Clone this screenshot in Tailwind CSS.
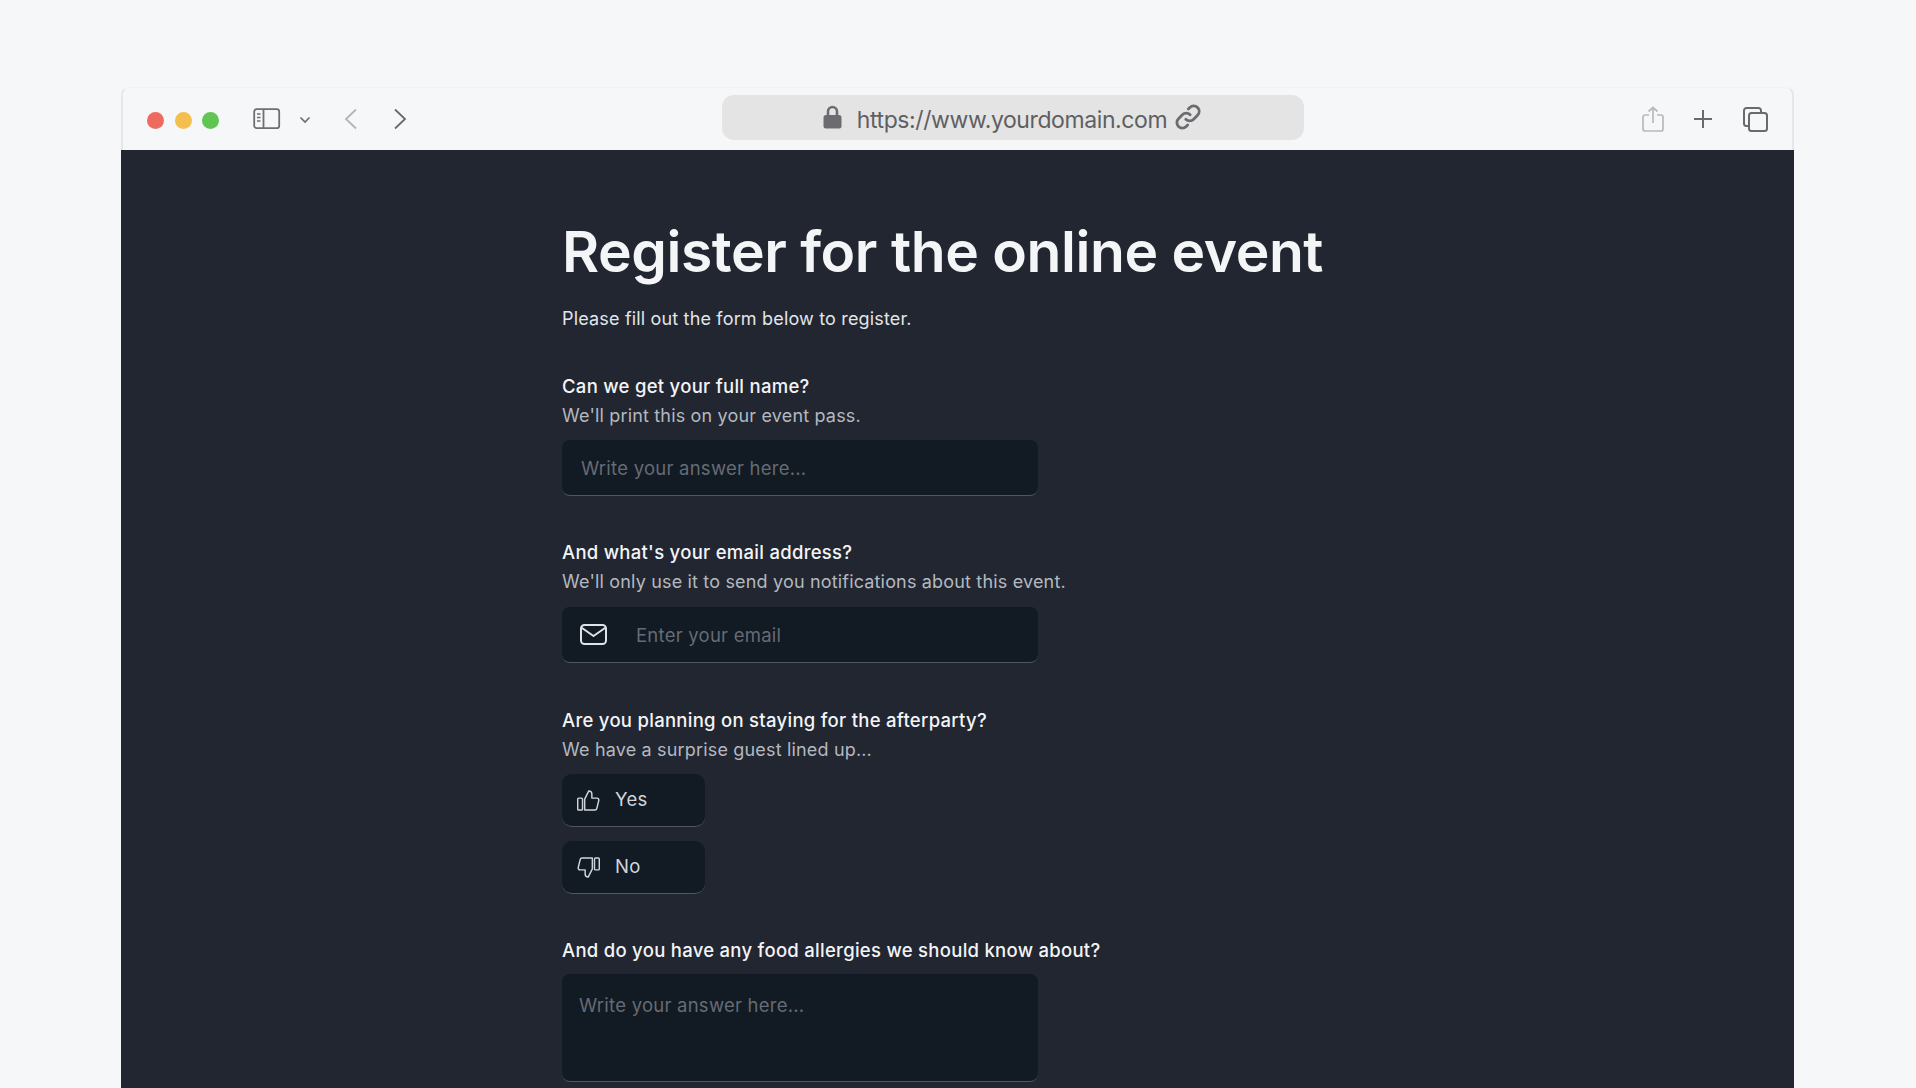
<!DOCTYPE html>
<html lang="en">

<head>
    <meta charset="UTF-8">
    <title>Register</title>
    <script src="https://cdn.jsdelivr.net/npm/@tailwindcss/browser@4"></script>
</head>

<body class="bg-[#f6f7f9] font-[Inter,sans-serif] h-[1088px] overflow-hidden">

    <div class="pt-[87px] pl-[121px] w-[1795px]">
        <div class="w-[1673px] h-[1001px] flex flex-col">

            <!-- browser toolbar -->
            <div class="h-[63px] shrink-0 relative flex items-center bg-[#f6f7f9] rounded-t-[8px] border-x-2 border-t border-x-[#e6e7e9] border-t-[#f2f3f5] pt-[2px]">
                <div class="flex items-center gap-[10.500px] ml-[24px]">
                    <span class="w-[17px] h-[17px] rounded-full bg-[#ec6a5e]"></span>
                    <span class="w-[17px] h-[17px] rounded-full bg-[#f4bf4f]"></span>
                    <span class="w-[17px] h-[17px] rounded-full bg-[#61c554]"></span>
                </div>
                <svg class="ml-[34px] mb-[2px]" width="28" height="22" viewBox="0 0 28 22" fill="none">
                    <rect x="1.200" y="1.200" width="25" height="19" rx="2.500" stroke="#6f6f72" stroke-width="1.800"/>
                    <path d="M10.500 1.500V20" stroke="#6f6f72" stroke-width="1.800"/>
                    <path d="M4 6h3.500M4 9.500h3.500M4 13h3.500" stroke="#6f6f72" stroke-width="1.500"/>
                </svg>
                <svg class="ml-[18px]" width="12" height="8" viewBox="0 0 12 8" fill="none"><path d="M1.500 1.500 6 6l4.500-4.500" stroke="#6f6f72" stroke-width="1.700"/></svg>
                <svg class="ml-[33px] mb-[2px]" width="14" height="22" viewBox="0 0 14 22" fill="none"><path d="M12 1.500 2 11l10 9.500" stroke="#b5b5b7" stroke-width="1.800"/></svg>
                <svg class="ml-[35px] mb-[2px]" width="14" height="22" viewBox="0 0 14 22" fill="none"><path d="M2 1.500 12 11 2 20.500" stroke="#6a6a6d" stroke-width="1.800"/></svg>

                <div class="absolute left-[599px] top-[7px] w-[582px] h-[45px] rounded-[12px] bg-[#e4e4e5] flex items-center justify-center text-[23px] text-[#5f5f62] tracking-[-0.4px] pr-[2px]">
                    <svg width="19" height="24" viewBox="0 0 19 24" fill="none" class="mr-[15px] mb-[1px]">
                        <path d="M5 11V6.500a4.500 4.500 0 0 1 9 0V11" stroke="#6c6c70" stroke-width="2.600"/>
                        <rect x="0.500" y="10" width="18" height="13.500" rx="2.500" fill="#6c6c70"/>
                    </svg>
                    <span class="leading-none mt-[5px]">https://www.yourdomain.com</span>
                    <svg width="26" height="26" viewBox="0 0 24 24" fill="none" class="ml-[8px] mb-[2px]" stroke="#6c6c70" stroke-width="2.600" stroke-linecap="round">
                        <path d="M10 14a5 5 0 0 0 7.200 0l3.600-3.600a5 5 0 0 0-7.100-7.100l-1.400 1.400"/>
                        <path d="M14 10a5 5 0 0 0-7.200 0l-3.600 3.600a5 5 0 0 0 7.100 7.100l1.400-1.400"/>
                    </svg>
                </div>

                <div class="ml-auto flex items-center mr-[24px] mb-[2px]">
                    <svg width="22" height="26" viewBox="0 0 22 26" fill="none" stroke="#b9b9bb" stroke-width="1.700" class="mb-[1px]">
                        <path d="M7 9H3a2 2 0 0 0-2 2v12a2 2 0 0 0 2 2h16a2 2 0 0 0 2-2V11a2 2 0 0 0-2-2h-4"/>
                        <path d="M11 17V1.500M6.500 5.500 11 1.500l4.500 4"/>
                    </svg>
                    <svg class="ml-[29px]" width="20" height="20" viewBox="0 0 20 20" fill="none" stroke="#6a6a6d" stroke-width="2"><path d="M10 1v18M1 10h18"/></svg>
                    <svg class="ml-[30px]" width="25" height="25" viewBox="0 0 25 25" fill="none" stroke="#6a6a6d" stroke-width="2">
                        <path d="M5 19H3.500A2.500 2.500 0 0 1 1 16.500V3.500A2.500 2.500 0 0 1 3.500 1h12A2.500 2.500 0 0 1 18 3.500V6"/>
                        <rect x="6" y="6" width="18" height="18" rx="2.500"/>
                    </svg>
                </div>
            </div>

            <!-- page -->
            <div class="flex-1 bg-[#212631] pl-[441px] overflow-hidden">
                <h1 class="mt-[66px] text-[57px] leading-[71px] font-semibold text-[#f4f5f6] tracking-[-0.45px]">Register for the online event</h1>
                <p class="mt-[18px] text-[18px] leading-[27px] text-[#e3e5e8] tracking-[0.17px]">Please fill out the form below to register.</p>

                <label class="block mt-[40px] text-[18.500px] leading-[28px] font-medium text-[#f3f4f6] tracking-[0.28px]">Can we get your full name?</label>
                <p class="mt-[2px] text-[18px] leading-[28px] text-[#b4b8bf] tracking-[0.17px]">We'll print this on your event pass.</p>
                <div class="mt-[10px] w-[476px] h-[56px] rounded-[8px] bg-[#121a23] border-b border-[#505662] flex items-center pl-[19px] pt-[2px] text-[18.500px] text-[#666b75] tracking-[0.24px]">Write your answer here...</div>

                <label class="block mt-[42px] text-[18.500px] leading-[28px] font-medium text-[#f3f4f6] tracking-[0.28px]">And what's your email address?</label>
                <p class="mt-[2px] text-[18px] leading-[28px] text-[#b4b8bf] tracking-[0.17px]">We'll only use it to send you notifications about this event.</p>
                <div class="mt-[11px] w-[476px] h-[56px] rounded-[8px] bg-[#121a23] border-b border-[#505662] flex items-center pl-[18px] text-[18.500px] text-[#666b75] tracking-[0.24px]">
                    <svg width="27" height="21" viewBox="0 0 27 21" fill="none" stroke="#dfe2e6" stroke-width="2" stroke-linejoin="round" stroke-linecap="round">
                        <rect x="1" y="1" width="25" height="19" rx="3.500"/>
                        <path d="M2 4 13.500 12 25 4"/>
                    </svg>
                    <span class="ml-[29px] mt-[2px]">Enter your email</span>
                </div>

                <label class="block mt-[43px] text-[18.500px] leading-[28px] font-medium text-[#f3f4f6] tracking-[0.28px]">Are you planning on staying for the afterparty?</label>
                <p class="mt-[2px] text-[18px] leading-[28px] text-[#b4b8bf] tracking-[0.17px]">We have a surprise guest lined up...</p>
                <div class="mt-[10px] w-[143px] h-[53px] rounded-[10px] bg-[#121a23] border-b border-[#505662] flex items-center pl-[15px] text-[18.500px] text-[#d1d5db] tracking-[0.24px]">
                    <svg width="23" height="23" viewBox="0 0 24 24" fill="none" stroke="#d1d5db" stroke-width="1.500" stroke-linejoin="round">
                        <rect x="0.750" y="9.500" width="5" height="12.500" rx="1"/>
                        <path d="M8 10.500 12.300 2c2 0 3.200 1.500 3.200 3.200v4.300h5.200a2 2 0 0 1 2 2.500l-2 8.300a2 2 0 0 1-2 1.700H8z"/>
                    </svg>
                    <span class="ml-[15px]">Yes</span>
                </div>
                <div class="mt-[14px] w-[143px] h-[53px] rounded-[10px] bg-[#121a23] border-b border-[#505662] flex items-center pl-[15px] text-[18.500px] text-[#d1d5db] tracking-[0.24px]">
                    <svg width="23" height="23" viewBox="0 0 24 24" fill="none" stroke="#d1d5db" stroke-width="1.500" stroke-linejoin="round">
                        <g transform="rotate(180 12 12)">
                            <rect x="0.750" y="9.500" width="5" height="12.500" rx="1"/>
                            <path d="M8 10.500 12.300 2c2 0 3.200 1.500 3.200 3.200v4.300h5.200a2 2 0 0 1 2 2.500l-2 8.300a2 2 0 0 1-2 1.700H8z"/>
                        </g>
                    </svg>
                    <span class="ml-[15px]">No</span>
                </div>

                <label class="block mt-[42px] text-[18.500px] leading-[28px] font-medium text-[#f3f4f6] tracking-[0.28px]">And do you have any food allergies we should know about?</label>
                <div class="mt-[10px] w-[476px] h-[108px] rounded-[8px] bg-[#121a23] border-b border-[#505662] pl-[17px] pt-[17px] text-[18.500px] leading-[28px] text-[#666b75] tracking-[0.24px]">Write your answer here...</div>
            </div>
        </div>
    </div>

</body>

</html>
